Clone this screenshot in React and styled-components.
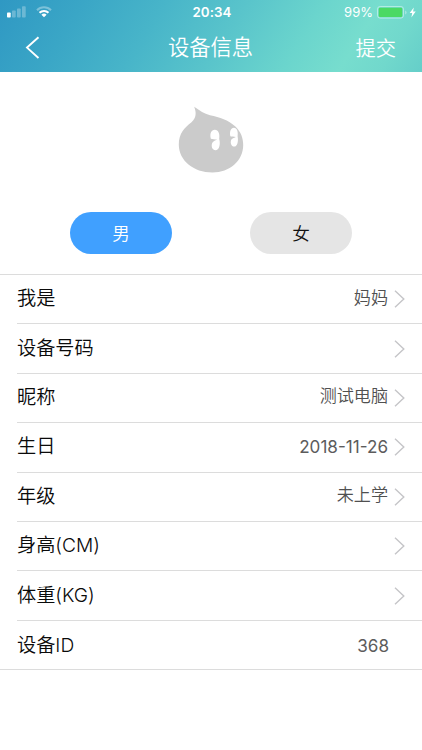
import React, { useState } from "react";
import styled, { createGlobalStyle } from "styled-components";

const GlobalStyle = createGlobalStyle`
  * {
    box-sizing: border-box;
  }
  body {
    margin: 0;
    background-color: #ffffff;
    font-family: Inter, "Noto Sans CJK SC", sans-serif;
  }
`;

const Container = styled.div`
  width: 100%;
  min-height: 750px;
  display: flex;
  flex-direction: column;
  background-color: #ffffff;
`;

const Header = styled.header`
  height: 72px;
  display: flex;
  flex-direction: column;
  color: #ffffff;
  background: linear-gradient(
    122deg,
    #2f98c3 0%,
    #3aa6c6 18%,
    #48b5c9 36%,
    #59c4cb 53%,
    #6bd5cd 70%,
    #77ddce 82%,
    #71d8cc 91%,
    #65cec9 100%
  );
`;

const StatusBar = styled.div`
  height: 24px;
  padding: 0 5px 0 7px;
  display: grid;
  grid-template-columns: 1fr auto 1fr;
  align-items: center;
  font-size: 13.3px;
  line-height: 24px;
`;
const StatusLeft = styled.div`
  display: flex;
  align-items: center;
  gap: 10px;
`;
const Clock = styled.div`
  font-weight: 600;
  letter-spacing: 0.1px;
`;
const StatusRight = styled.div`
  display: flex;
  justify-content: flex-end;
  align-items: center;
`;
const Percent = styled.span`
  margin-right: 4px;
  font-size: 13px;
  font-weight: 400;
`;

const NavBar = styled.div`
  height: 48px;
  padding: 0 26px 0 25px;
  display: grid;
  grid-template-columns: 1fr auto 1fr;
  align-items: center;
`;
const NavButton = styled.button`
  padding: 0;
  display: flex;
  justify-self: ${(props) => props.$side};
  border: none;
  background: none;
  color: #ffffff;
  font-family: inherit;
  font-size: 20.3px;
  font-weight: 350;
  line-height: 47px;
`;
const Title = styled.h1`
  margin: 0;
  padding-bottom: 2px;
  font-size: 21.3px;
  font-weight: 350;
  line-height: 46px;
`;

const Avatar = styled.div`
  height: 140px;
  padding-top: 34px;
  display: flex;
  justify-content: center;
`;

const Genders = styled.div`
  height: 62px;
  padding: 0 70px;
  display: flex;
  justify-content: space-between;
  align-items: flex-start;
`;
const GenderButton = styled.button`
  width: 102px;
  height: 42px;
  padding: 1px 0 0;
  border: none;
  border-radius: 21px;
  font-family: inherit;
  font-size: 17.6px;
  font-weight: 350;
  line-height: 42px;
  color: ${(props) => (props.$active ? "#ffffff" : "#111111")};
  background-color: ${(props) => (props.$active ? "#40a0ff" : "#e5e5e5")};
`;

const List = styled.div`
  border-top: 1px solid #dcdcdc;
  border-bottom: 1px solid #dcdcdc;
`;
const Row = styled.div`
  height: 49.4px;
  margin-left: 17px;
  padding-right: 17px;
  display: flex;
  align-items: center;
  border-bottom: 1px solid #dcdcdc;
  &:last-child {
    height: 48.4px;
    padding-top: 2px;
    border-bottom: none;
  }
`;
const Label = styled.div`
  flex: 1;
  font-size: 19.2px;
  font-weight: 350;
  line-height: 46px;
  padding-bottom: 2px;
  color: #0a0a0a;
`;
const Value = styled.div`
  margin-right: ${(props) => (props.$arrow ? "6px" : "16px")};
  padding-bottom: ${(props) => (props.$latin ? "0" : "3px")};
  font-size: 17.1px;
  font-weight: ${(props) => (props.$latin ? 400 : 350)};
  line-height: 46px;
  color: ${(props) => (props.$latin ? "#5c5c5c" : "#505050")};
`;

const rows = [
  { label: "我是", value: "妈妈", arrow: true },
  { label: "设备号码", value: "", arrow: true },
  { label: "昵称", value: "测试电脑", arrow: true },
  { label: "生日", value: "2018-11-26", arrow: true, latin: true },
  { label: "年级", value: "未上学", arrow: true },
  { label: "身高(CM)", value: "", arrow: true },
  { label: "体重(KG)", value: "", arrow: true },
  { label: "设备ID", value: "368", arrow: false, latin: true },
];

function SignalIcon() {
  return (
    <svg width="19" height="12" viewBox="0 0 19 12" fill="#ffffff">
      <rect x="0" y="6.5" width="3.7" height="5" rx="0.8" />
      <g opacity="0.28">
        <rect x="5" y="4.5" width="3.7" height="7" rx="0.8" />
        <rect x="10" y="2.5" width="3.7" height="9" rx="0.8" />
        <rect x="15" y="0.3" width="3.7" height="11.2" rx="0.8" />
      </g>
    </svg>
  );
}

function WifiIcon() {
  return (
    <svg width="16" height="12" viewBox="0 0 16 12" fill="none">
      <path
        d="M1 4.3a9.7 9.7 0 0 1 14 0"
        stroke="#ffffff"
        strokeWidth="2"
        opacity="0.35"
      />
      <path d="M3.5 6.8a6.3 6.3 0 0 1 9 0" stroke="#ffffff" strokeWidth="2" />
      <path d="M8 11.3 5.4 8.7a3.7 3.7 0 0 1 5.2 0z" fill="#ffffff" />
    </svg>
  );
}

function BatteryIcon() {
  return (
    <svg width="40" height="13" viewBox="0 0 40 13">
      <rect
        x="0.5"
        y="0.5"
        width="26"
        height="11.6"
        rx="2.6"
        fill="none"
        stroke="#ffffff"
        strokeOpacity="0.45"
      />
      <rect x="1.8" y="1.7" width="23.4" height="9.2" rx="1.2" fill="#4bd964" />
      <path d="M28.3 4.5a2.3 2.3 0 0 1 0 4z" fill="#ffffff" opacity="0.5" />
      <path d="M36.8 1.5 32.7 7.1h2.5l-.8 4.3 4.3-5.8h-2.6z" fill="#ffffff" />
    </svg>
  );
}

function BackIcon() {
  return (
    <svg width="15" height="24" viewBox="0 0 15 24" fill="none">
      <path d="M13.5 1.2 2 11.6l11.5 10.4" stroke="#ffffff" strokeWidth="1.9" />
    </svg>
  );
}

function ArrowIcon() {
  return (
    <svg width="11" height="18" viewBox="0 0 11 18" fill="none">
      <path d="M1 0.8 9.8 9 1 17.2" stroke="#c5c5c8" strokeWidth="1.4" />
    </svg>
  );
}

function DropIcon() {
  return (
    <svg width="66" height="68" viewBox="0 0 66 68">
      <path
        d="M16.2.8C22 4.8 26 7.8 32 9.2 42 11.5 50 13.5 57.4 20.5 62.8 25.800 65.2 32 65.2 39 65.2 55 51.5 66.5 34.5 66.5 15.5 66.5.8 54.5.8 38.5.8 27.5 6.5 21.5 13.5 16.2 18.4 12.2 18.5 6.5 16.2.8z"
        fill="#cbcbcb"
      />
      <g fill="#ffffff">
        <path d="M32.8 32.8C31.6 27.500 33.300 23.800 36.800 23.800c3.600 0 5.200 4 4.400 9.100 1.600 5.600-.2 11.300-3.600 11.300-3.300 0-4.700-4-3.400-7.300.8-1.200 2.700-2.300 5-3.300-2.200-.2-4.900-.4-6.400-.8z" />
        <path d="M52.300 30.200C51.400 25.600 52.800 21.700 55.900 21.700c3.200 0 4.300 3.800 3.700 8.500 1.100 5.300-.4 10.400-3.400 10.400-2.900 0-4.200-3.800-3-6.900.8-1 2.600-1.900 4.600-2.800-2-.2-4.300-.3-5.500-.7z" />
      </g>
    </svg>
  );
}

function App() {
  const [gender, setGender] = useState("男");
  return (
    <Container>
      <GlobalStyle />
      <Header>
        <StatusBar>
          <StatusLeft>
            <SignalIcon />
            <WifiIcon />
          </StatusLeft>
          <Clock>20:34</Clock>
          <StatusRight>
            <Percent>99%</Percent>
            <BatteryIcon />
          </StatusRight>
        </StatusBar>
        <NavBar>
          <NavButton $side="start">
            <BackIcon />
          </NavButton>
          <Title>设备信息</Title>
          <NavButton $side="end">提交</NavButton>
        </NavBar>
      </Header>

      <Avatar>
        <DropIcon />
      </Avatar>
      <Genders>
        {["男", "女"].map((item) => (
          <GenderButton
            key={item}
            $active={gender === item}
            onClick={() => setGender(item)}
          >
            {item}
          </GenderButton>
        ))}
      </Genders>

      <List>
        {rows.map((row) => (
          <Row key={row.label}>
            <Label>{row.label}</Label>
            <Value $arrow={row.arrow} $latin={row.latin}>
              {row.value}
            </Value>
            {row.arrow ? <ArrowIcon /> : <></>}
          </Row>
        ))}
      </List>
    </Container>
  );
}

export default App;
